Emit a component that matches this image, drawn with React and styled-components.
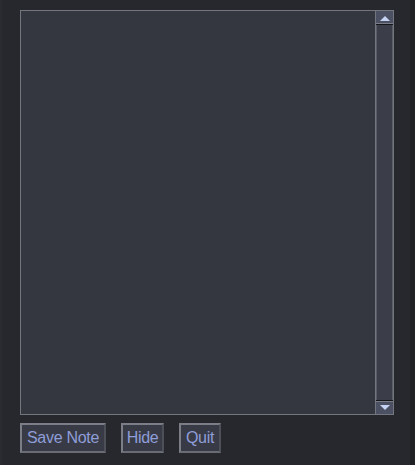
import React from "react";
import styled, { createGlobalStyle } from "styled-components";

const Global = createGlobalStyle`
  html, body {
    margin: 0;
    background: #27282d;
  }
  body {
    font-family: "Liberation Sans", Arial, sans-serif;
  }
`;

const Page = styled.div`
  width: 415px;
  height: 465px;
  box-sizing: border-box;
  padding: 10px 22px 0 20px;
  display: flex;
  flex-direction: column;
  gap: 8px;
  background: linear-gradient(to right, #2b2c31 0 2px, #27282d 2px calc(100% - 5px), #202125 calc(100% - 5px));
`;

const NoteBox = styled.div`
  display: flex;
  width: 374px;
  height: 405px;
  box-sizing: border-box;
  border: 1px solid #74767e;
  background: #343640;
`;

const NoteText = styled.textarea`
  flex: 1;
  border: none;
  outline: none;
  resize: none;
  background: transparent;
  color: #c9cfe6;
  font-family: "Liberation Sans", Arial, sans-serif;
  font-size: 14px;
  padding: 4px;
`;

const ScrollBar = styled.div`
  width: 17px;
  display: flex;
  flex-direction: column;
  border-left: 1px solid #74767e;
  background: #3b3e48;
`;

const Track = styled.div`
  flex: 1;
  border-left: 1px solid #5a5d68;
  border-right: 1px solid #5a5d68;
`;

const Arrow = styled.div`
  height: 12px;
  display: flex;
  align-items: center;
  justify-content: center;
  background: #4b5162;
  border-top: ${({ $down }) => ($down ? "1px solid #15161a" : "none")};
  border-bottom: ${({ $down }) => ($down ? "none" : "1px solid #15161a")};
  box-shadow: ${({ $down }) =>
    $down ? "inset 0 1px 0 #7a7d88" : "inset 0 -1px 0 #7a7d88"};
  padding: ${({ $down }) => ($down ? "0 0 1px" : "1px 0 0")};
`;

const Triangle = styled.span`
  width: 0;
  height: 0;
  border-left: 5px solid transparent;
  border-right: 5px solid transparent;
  ${({ $down }) =>
    $down
      ? "border-top: 5px solid #c6d2f2;"
      : "border-bottom: 5px solid #c6d2f2;"}
`;

const Buttons = styled.div`
  display: flex;
  gap: 15px;
`;

const Button = styled.button`
  width: ${({ $w }) => $w}px;
  height: 30px;
  box-sizing: border-box;
  padding: 0;
  background: #383b46;
  color: #8f9dd8;
  font-family: "Liberation Sans", Arial, sans-serif;
  font-size: 16px;
  letter-spacing: -0.3px;
  border-top: 2px solid #7c7e87;
  border-left: 2px solid #7c7e87;
  border-right: 2px solid #4e5059;
  border-bottom: 2px solid #6a6c75;
  cursor: pointer;
`;

export default function App() {
  return (
    <>
      <Global />
      <Page>
        <NoteBox>
          <NoteText />
          <ScrollBar>
            <Arrow>
              <Triangle />
            </Arrow>
            <Track />
            <Arrow $down>
              <Triangle $down />
            </Arrow>
          </ScrollBar>
        </NoteBox>
        <Buttons>
          <Button $w={86}>Save Note</Button>
          <Button $w={43}>Hide</Button>
          <Button $w={42}>Quit</Button>
        </Buttons>
      </Page>
    </>
  );
}
